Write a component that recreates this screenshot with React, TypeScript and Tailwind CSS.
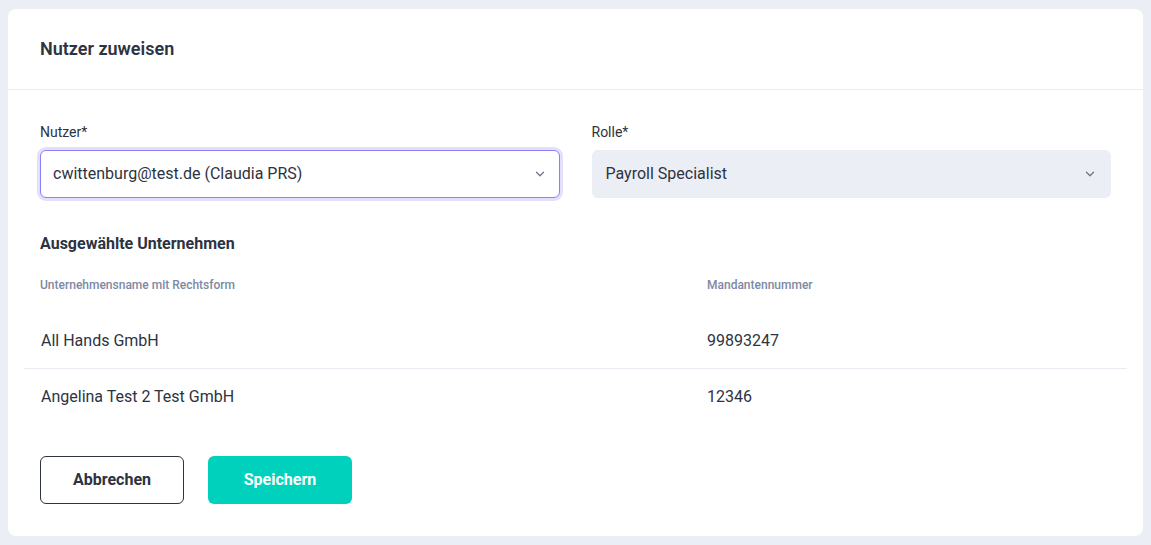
import React from 'react';

const rows = [
  { name: 'All Hands GmbH', nummer: '99893247' },
  { name: 'Angelina Test 2 Test GmbH', nummer: '12346' },
];

const Chevron: React.FC = () => (
  <svg width="14" height="14" viewBox="0 0 14 14" fill="none" className="text-[#6f7688]">
    <path d="M3.5 5.25 7 8.75 10.5 5.25" stroke="currentColor" strokeWidth="1.3" strokeLinecap="round" strokeLinejoin="round" />
  </svg>
);

const App: React.FC = () => {
  return (
    <div className="min-h-[545px] bg-[#eceef6] px-2 pt-[9px] pb-[9px] font-['Roboto',sans-serif] text-[#2d3340]">
      <div className="bg-white rounded-lg">
        <div className="h-[81px] flex items-center px-8 border-b border-[#e9ebf2]">
          <h1 className="text-lg font-semibold text-[#2d3340]">Nutzer zuweisen</h1>
        </div>

        <div className="px-8 pt-8 pb-8">
          <div className="grid grid-cols-2 gap-8">
            <div>
              <label className="block text-sm leading-5 mb-2 text-[#2d3340]">Nutzer*</label>
              <div className="h-12 flex items-center justify-between px-3 rounded-md border border-[#8b80f9] ring-[3px] ring-[#e3e0fd] bg-white">
                <span className="text-base">cwittenburg@test.de (Claudia PRS)</span>
                <Chevron />
              </div>
            </div>
            <div>
              <label className="block text-sm leading-5 mb-2 text-[#2d3340]">Rolle*</label>
              <div className="h-12 flex items-center justify-between px-[14px] rounded-md bg-[#eceef6]">
                <span className="text-base">Payroll Specialist</span>
                <Chevron />
              </div>
            </div>
          </div>

          <h2 className="mt-[35px] text-base leading-[22px] font-bold text-[#2d3340]">Ausgewählte Unternehmen</h2>

          <div className="-mx-4 mt-0.5">
            <div className="grid grid-cols-[667px_1fr] h-14 items-center text-xs font-medium text-[#7d89a3]">
              <div className="px-4">Unternehmensname mit Rechtsform</div>
              <div className="px-4">Mandantennummer</div>
            </div>
            {rows.map((r, i) => (
              <div
                key={r.nummer}
                className={`grid grid-cols-[667px_1fr] h-14 items-center text-base ${i < rows.length - 1 ? 'border-b border-[#e9ebf2]' : ''}`}
              >
                <div className="pl-[17px] pr-4">{r.name}</div>
                <div className="px-4">{r.nummer}</div>
              </div>
            ))}
          </div>

          <div className="mt-[31px] flex gap-6">
            <button className="w-36 h-12 rounded-md border border-[#2d3340] bg-white text-base font-bold text-[#2d3340]">
              Abbrechen
            </button>
            <button className="w-36 h-12 rounded-md bg-[#00d1bd] text-base font-bold text-white">
              Speichern
            </button>
          </div>
        </div>
      </div>
    </div>
  );
};

export default App;
